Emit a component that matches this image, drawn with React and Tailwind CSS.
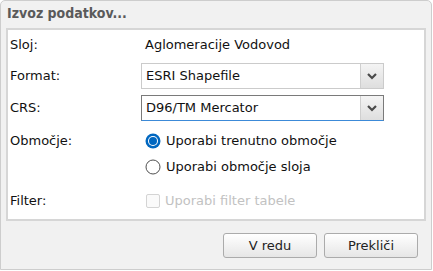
import React from 'react'

const font = { fontFamily: '"DejaVu Sans", Tahoma, sans-serif' }
const titleFont = { fontFamily: '"DejaVu Sans Condensed", "DejaVu Sans", Tahoma, sans-serif', fontStretch: 'condensed' }

const Chevron = () => (
  <svg width="12" height="8" viewBox="0 0 12 8">
    <path d="M2 2 L6 6 L10 2" fill="none" stroke="#4a4a4a" strokeWidth="2.2" />
  </svg>
)

const Select = ({ value, focused }) => (
  <div
    className={`flex h-[26px] w-[243px] items-stretch bg-white border ${
      focused ? 'border-[#7a7a7a] border-b-[#3c8ad8]' : 'border-[#cbcbcb]'
    }`}
  >
    <div className="flex flex-1 items-center pl-[4px] text-[13px] text-[#111]">{value}</div>
    <div className="flex w-[23px] items-center justify-center border-l border-[#cfcfcf] bg-gradient-to-b from-[#f4f4f4] to-[#dedede]">
      <Chevron />
    </div>
  </div>
)

const Radio = ({ checked, label }) => (
  <div className="flex items-center gap-[5px]">
    <svg width="16" height="16" viewBox="0 0 16 16">
      {checked ? (
        <>
          <circle cx="8" cy="8" r="7.5" fill="#0067c0" />
          <circle cx="8" cy="8" r="5" fill="#ffffff" />
          <circle cx="8" cy="8" r="4" fill="#0067c0" />
        </>
      ) : (
        <circle cx="8" cy="8" r="7" fill="#ffffff" stroke="#505050" strokeWidth="1" />
      )}
    </svg>
    <span className="text-[13px] text-[#111]">{label}</span>
  </div>
)

export default function App() {
  return (
    <div style={font} className="h-[271px] w-[433px] overflow-hidden">
      <div className="flex h-[270px] w-[432px] flex-col rounded-t-[5px] border border-[#cdcdcd] bg-[#f1f1f1]">
        <div style={titleFont} className="h-[27px] pl-[6px] pt-[4px] text-[14px] font-bold leading-[17px] text-[#5a5a5a]">
          Izvoz podatkov...
        </div>
        <div className="mx-[5px] h-[193px] border-2 border-[#d6d6d6] bg-white pl-[2px]">
          <div className="grid grid-cols-[131px_1fr] text-[13px] text-[#111]">
            <div className="flex h-[30px] items-center">Sloj:</div>
            <div className="flex h-[30px] items-center pl-[4px]">Aglomeracije Vodovod</div>

            <div className="mt-[3px] flex h-[26px] items-center">Format:</div>
            <div className="mt-[3px]"><Select value="ESRI Shapefile" /></div>

            <div className="mt-[6px] flex h-[26px] items-center">CRS:</div>
            <div className="mt-[6px]"><Select value="D96/TM Mercator" focused /></div>

            <div className="mt-[7px] flex h-[26px] items-center">Območje:</div>
            <div className="mt-[7px] flex h-[26px] items-center pl-[4px]">
              <Radio checked label="Uporabi trenutno območje" />
            </div>

            <div className="h-[26px]" />
            <div className="flex h-[26px] items-center pl-[4px]">
              <Radio label="Uporabi območje sloja" />
            </div>

            <div className="mt-[8px] flex h-[26px] items-center">Filter:</div>
            <div className="mt-[8px] flex h-[26px] items-center gap-[5px] pl-[5px]">
              <span className="h-[14px] w-[14px] rounded-[2px] border border-[#d4d4d4] bg-[#fafafa]" />
              <span className="text-[13px] text-[#c2c2c2]">Uporabi filter tabele</span>
            </div>
          </div>
        </div>
        <div className="mt-[12px] flex justify-end gap-[7px] pr-[13px]">
          <button className="h-[25px] w-[94px] rounded-[3px] border border-[#ababab] bg-gradient-to-b from-[#ffffff] to-[#e6e6e6] text-[13px] text-[#222]">
            V redu
          </button>
          <button className="h-[25px] w-[94px] rounded-[3px] border border-[#ababab] bg-gradient-to-b from-[#ffffff] to-[#e6e6e6] text-[13px] text-[#222]">
            Prekliči
          </button>
        </div>
      </div>
    </div>
  )
}
